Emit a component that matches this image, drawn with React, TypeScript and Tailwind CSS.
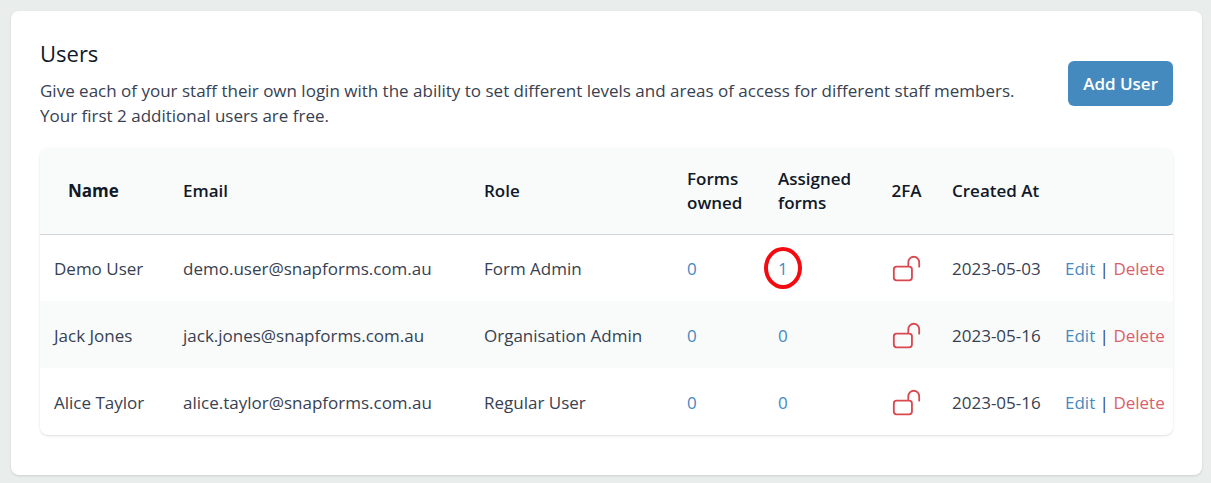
type User = {
  name: string;
  email: string;
  role: string;
  owned: number;
  assigned: number;
  created: string;
  highlighted?: boolean;
};

const users: User[] = [
  { name: 'Demo User', email: 'demo.user@snapforms.com.au', role: 'Form Admin', owned: 0, assigned: 1, created: '2023-05-03', highlighted: true },
  { name: 'Jack Jones', email: 'jack.jones@snapforms.com.au', role: 'Organisation Admin', owned: 0, assigned: 0, created: '2023-05-16' },
  { name: 'Alice Taylor', email: 'alice.taylor@snapforms.com.au', role: 'Regular User', owned: 0, assigned: 0, created: '2023-05-16' },
];

function LockOpenIcon() {
  return (
    <svg
      className="mx-auto size-[29px] text-[#d9484f]"
      viewBox="0 0 24 24"
      fill="none"
      stroke="currentColor"
      strokeWidth="1.5"
      strokeLinecap="round"
      strokeLinejoin="round"
      role="img"
      aria-label="Two-factor authentication off"
    >
      <path d="M13.5 10.5V6.75a4.5 4.5 0 1 1 9 0v3.75M3.75 21.75h10.5a2.25 2.25 0 0 0 2.25-2.25v-6.75a2.25 2.25 0 0 0-2.25-2.25H3.75a2.25 2.25 0 0 0-2.25 2.25v6.75a2.25 2.25 0 0 0 2.25 2.25Z" />
    </svg>
  );
}

function UserRow({ user }: { user: User }) {
  return (
    <tr className="h-[67px] even:bg-[#f9fbfb]">
      <td className="px-3.5 pt-0.5">{user.name}</td>
      <td className="px-3.5 pt-0.5">{user.email}</td>
      <td className="px-3.5 pt-0.5">{user.role}</td>
      <td className="px-3.5 pt-0.5">
        <a href="#owned" className="text-[#458abf]">{user.owned}</a>
      </td>
      <td className="px-3.5 pt-0.5">
        <a href="#assigned" className="relative text-[#458abf]">
          {user.assigned}
          {user.highlighted && (
            <span className="absolute top-1/2 left-1/2 h-[42px] w-[38px] -translate-x-1/2 -translate-y-1/2 rounded-[50%] border-4 border-[#f30b10]" />
          )}
        </a>
      </td>
      <td className="pt-0.5">
        <LockOpenIcon />
      </td>
      <td className="px-3.5 pt-0.5">{user.created}</td>
      <td className="pt-0.5 pl-3.5">
        <a href="#edit" className="text-[#458abf]">Edit</a>
        {' | '}
        <a href="#delete" className="text-[#d9606b]">Delete</a>
      </td>
    </tr>
  );
}

export default function App() {
  return (
    <div className="min-h-screen bg-[#e9eeed] pt-[11px] pr-[9px] pb-2 pl-[11px] font-['Open_Sans',sans-serif] text-[#374151]">
      <main className="rounded-lg bg-white px-[29px] pt-7 pb-10 shadow">
        <header className="flex items-center justify-between gap-8">
          <div>
            <h1 className="text-[22px] leading-7 text-[#111827]">Users</h1>
            <p className="mt-[11px] text-[17px] leading-[25px]">
              Give each of your staff their own login with the ability to set different levels and areas of access for different staff members.
              <br />
              Your first 2 additional users are free.
            </p>
          </div>
          <button type="button" className="h-[45px] shrink-0 rounded-md bg-[#458abf] px-[15px] text-[17px] font-semibold text-white">
            Add User
          </button>
        </header>

        <div className="mt-5 overflow-hidden rounded-lg shadow-sm">
          <table className="w-full table-fixed border-collapse text-left text-[17px] leading-6 whitespace-nowrap">
            <colgroup>
              <col className="w-[129px]" />
              <col className="w-[301px]" />
              <col className="w-[203px]" />
              <col className="w-[91px]" />
              <col className="w-[111px]" />
              <col className="w-[63px]" />
              <col className="w-[113px]" />
              <col className="w-[122px]" />
            </colgroup>
            <thead className="border-b border-[#d1d5db] bg-[#f9fbfb] text-[#111827]">
              <tr className="h-[86px]">
                <th scope="col" className="pl-7 font-bold">Name</th>
                <th scope="col" className="px-3.5 font-semibold">Email</th>
                <th scope="col" className="px-3.5 font-semibold">Role</th>
                <th scope="col" className="px-3.5 font-semibold">Forms<br />owned</th>
                <th scope="col" className="px-3.5 font-semibold">Assigned<br />forms</th>
                <th scope="col" className="text-center font-semibold">2FA</th>
                <th scope="col" className="px-3.5 font-semibold">Created At</th>
                <td />
              </tr>
            </thead>
            <tbody>
              {users.map((user) => (
                <UserRow key={user.email} user={user} />
              ))}
            </tbody>
          </table>
        </div>
      </main>
    </div>
  );
}
